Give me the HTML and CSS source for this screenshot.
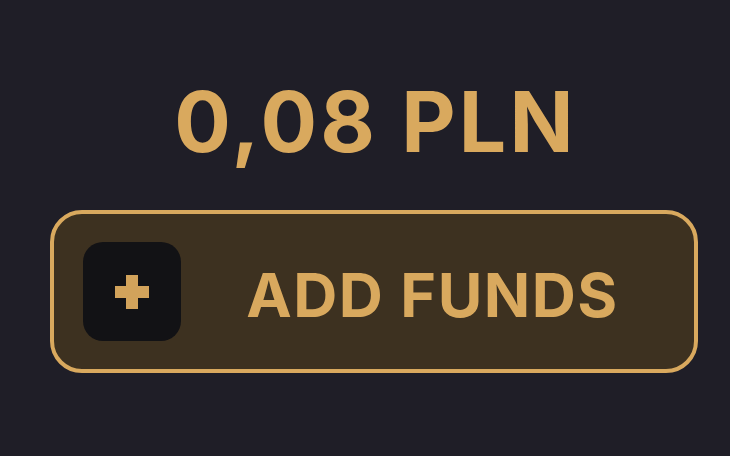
FILE: index.html
```html
<!DOCTYPE html>
<html lang="en">
<head>
  <meta charset="UTF-8">
  <meta name="viewport" content="width=device-width, initial-scale=1.0">
  <title>Wallet</title>
  <link rel="stylesheet" href="styles.css">
</head>
<body>
  <div class="wallet">
    <div class="balance">0,08 PLN</div>
    <button class="add-funds">
      <span class="plus-box">
        <svg width="38" height="38" viewBox="0 0 38 38">
          <path d="M19 2v34M2 19h34" stroke="#d2a35b" stroke-width="12"/>
        </svg>
      </span>
      <span class="label">ADD FUNDS</span>
    </button>
  </div>
</body>
</html>
```

FILE: styles.css
```css
body {
  margin: 0;
  padding: 0;
  height: 456px;
  background-color: #1f1e27;
  font-family: Inter, "Noto Sans", sans-serif;
  overflow: hidden;
}
.wallet {
  display: flex;
  flex-direction: column;
  align-items: center;
  padding: 72px 32px 0 50px;
}
.balance {
  color: #d9a95e;
  font-size: 84px;
  font-weight: 700;
  line-height: 100px;
  letter-spacing: 3.2px;
  margin: 0 0 38px 3px;
}
.add-funds {
  display: flex;
  align-items: center;
  box-sizing: border-box;
  width: 648px;
  height: 163px;
  padding: 0 0 0 29px;
  background-color: #3d3120;
  border: 4px solid #d9a95e;
  border-radius: 32px;
  font-family: inherit;
  cursor: pointer;
}
.plus-box {
  display: flex;
  align-items: center;
  justify-content: center;
  width: 98px;
  height: 99px;
  background-color: #121215;
  border-radius: 20px;
}
.label {
  flex: 1;
  text-align: center;
  color: #d9a95e;
  font-size: 61px;
  font-weight: 700;
  letter-spacing: 1.5px;
  padding: 6px 10px 0 0;
}
```
